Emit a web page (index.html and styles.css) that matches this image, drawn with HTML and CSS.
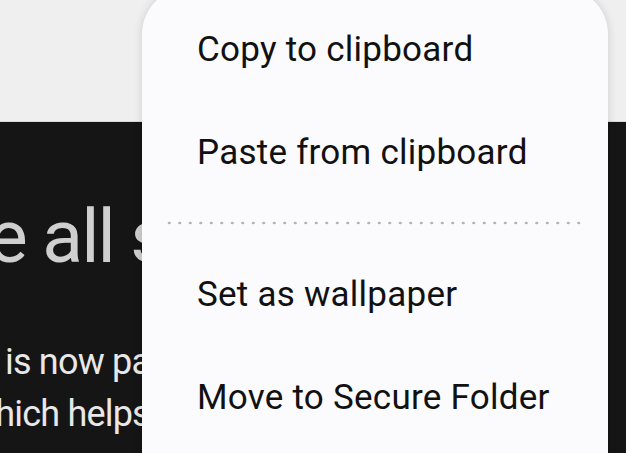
FILE: index.html
```html
<!DOCTYPE html>
<html lang="en">
<head>
<meta charset="utf-8">
<title>Menu</title>
<link rel="stylesheet" href="styles.css">
</head>
<body>
<div class="screen">
  <div class="topbar"></div>
  <div class="content">
    <h1 class="headline">e all services</h1>
    <p class="body-text"><span class="line line-first">is now part of the app</span><span class="line line-second">which helps you stay safe</span></p>
  </div>
  <div class="menu">
    <div class="menu-item">Copy to clipboard</div>
    <div class="menu-item">Paste from clipboard</div>
    <div class="divider"></div>
    <div class="menu-item">Set as wallpaper</div>
    <div class="menu-item">Move to Secure Folder</div>
  </div>
</div>
</body>
</html>
```

FILE: styles.css
```css
html, body {
  margin: 0;
  padding: 0;
  width: 626px;
  height: 453px;
  overflow: hidden;
  background: #151515;
  font-family: Roboto, "Liberation Sans", sans-serif;
}

.screen {
  position: relative;
  width: 626px;
  height: 453px;
  overflow: hidden;
  display: flex;
  flex-direction: column;
}

.topbar {
  flex: none;
  height: 121px;
  background: #efefef;
  border-bottom: 1px solid #d8d8d8;
}

.content {
  flex: 1;
  background: #151515;
  padding-top: 70px;
  white-space: nowrap;
}

.headline {
  margin: 0 0 0 -12px;
  font-weight: 400;
  font-size: 75px;
  letter-spacing: -2px;
  line-height: 88px;
  color: #cfcfcf;
}

.body-text {
  margin: 56px 0 0 0;
  font-size: 36px;
  letter-spacing: -0.8px;
  line-height: 52px;
  color: #e8e8e8;
}

.line {
  display: block;
}

.line-first {
  margin-left: 5px;
}

.line-second {
  margin-left: -31px;
}

.menu {
  position: absolute;
  left: 142px;
  top: -12px;
  width: 466px;
  height: 520px;
  background: #fbfbfd;
  border-radius: 46px;
  box-shadow: 0 0 10px rgba(0, 0, 0, 0.14);
  padding-top: 10px;
  box-sizing: border-box;
}

.menu-item {
  height: 103px;
  line-height: 103px;
  padding-left: 55px;
  font-size: 35px;
  letter-spacing: 0.25px;
  color: #111;
  white-space: nowrap;
}

.divider {
  height: 39px;
  margin: 0 24px 0 22px;
  background-image: radial-gradient(circle, #b3b3b3 1.3px, transparent 1.6px);
  background-size: 10.5px 6px;
  background-repeat: repeat-x;
  background-position: 0 16px;
}
```
